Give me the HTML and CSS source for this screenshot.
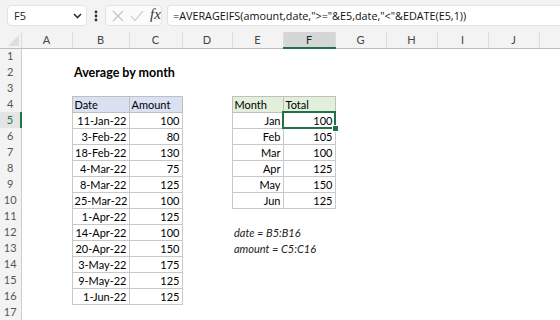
FILE: index.html
```html
<!DOCTYPE html>
<html lang="en">
<head>
  <meta charset="UTF-8">
  <title>Average by month</title>
  <link rel="stylesheet" href="styles.css">
</head>
<body>
  <div class="app">
    <!-- formula bar -->
    <div class="formula-bar">
      <div class="name-box">
        <span>F5</span>
        <svg class="chevron" width="9" height="6" viewBox="0 0 9 6"><path d="M1 1l3.5 3.5L8 1" fill="none" stroke="#333" stroke-width="1.6"/></svg>
      </div>
      <svg class="dots" width="4" height="12" viewBox="0 0 4 12"><circle cx="2" cy="2" r="1.4" fill="#333"/><circle cx="2" cy="6" r="1.4" fill="#333"/><circle cx="2" cy="10" r="1.4" fill="#333"/></svg>
      <div class="fx-box">
        <svg width="12" height="12" viewBox="0 0 12 12"><path d="M1 1l10 10M11 1L1 11" stroke="#c4c4c4" stroke-width="1.1"/></svg>
        <svg width="14" height="12" viewBox="0 0 14 12"><path d="M1 6l4 4.5L13 1" fill="none" stroke="#c4c4c4" stroke-width="1.1"/></svg>
        <span class="fx">fx</span>
      </div>
      <div class="formula">=AVERAGEIFS(amount,date,"&gt;="&amp;E5,date,"&lt;"&amp;EDATE(E5,1))</div>
    </div>

    <!-- sheet -->
    <table class="sheet">
      <colgroup>
        <col class="c-rh"><col class="c-a"><col class="c-b"><col class="c-c"><col class="c-d"><col class="c-e">
        <col class="c-f"><col class="c-g"><col class="c-h"><col class="c-i"><col class="c-j"><col>
      </colgroup>
      <thead>
        <tr>
          <th class="corner"><span class="tri"></span></th>
          <th>A</th><th>B</th><th>C</th><th>D</th><th>E</th><th class="active">F</th><th>G</th><th>H</th><th>I</th><th>J</th><th></th>
        </tr>
      </thead>
      <tbody>
        <tr><th>1</th><td></td><td></td><td></td><td></td><td></td><td></td><td></td><td></td><td></td><td></td><td></td></tr>
        <tr><th>2</th><td></td><td class="title">Average by month</td><td></td><td></td><td></td><td></td><td></td><td></td><td></td><td></td><td></td></tr>
        <tr><th>3</th><td></td><td></td><td></td><td></td><td></td><td></td><td></td><td></td><td></td><td></td><td></td></tr>
        <tr><th>4</th><td></td><td class="hd blue">Date</td><td class="hd blue">Amount</td><td></td><td class="hd green">Month</td><td class="hd green">Total</td><td></td><td></td><td></td><td></td><td></td></tr>
        <tr><th class="active">5</th><td></td><td class="tb">11-Jan-22</td><td class="tb">100</td><td></td><td class="tb">Jan</td><td class="tb sel">100</td><td></td><td></td><td></td><td></td><td></td></tr>
        <tr><th>6</th><td></td><td class="tb">3-Feb-22</td><td class="tb">80</td><td></td><td class="tb">Feb</td><td class="tb">105</td><td></td><td></td><td></td><td></td><td></td></tr>
        <tr><th>7</th><td></td><td class="tb">18-Feb-22</td><td class="tb">130</td><td></td><td class="tb">Mar</td><td class="tb">100</td><td></td><td></td><td></td><td></td><td></td></tr>
        <tr><th>8</th><td></td><td class="tb">4-Mar-22</td><td class="tb">75</td><td></td><td class="tb">Apr</td><td class="tb">125</td><td></td><td></td><td></td><td></td><td></td></tr>
        <tr><th>9</th><td></td><td class="tb">8-Mar-22</td><td class="tb">125</td><td></td><td class="tb">May</td><td class="tb">150</td><td></td><td></td><td></td><td></td><td></td></tr>
        <tr><th>10</th><td></td><td class="tb">25-Mar-22</td><td class="tb">100</td><td></td><td class="tb">Jun</td><td class="tb">125</td><td></td><td></td><td></td><td></td><td></td></tr>
        <tr><th>11</th><td></td><td class="tb">1-Apr-22</td><td class="tb">125</td><td></td><td></td><td></td><td></td><td></td><td></td><td></td><td></td></tr>
        <tr><th>12</th><td></td><td class="tb">14-Apr-22</td><td class="tb">100</td><td></td><td class="note">date = B5:B16</td><td></td><td></td><td></td><td></td><td></td><td></td></tr>
        <tr><th>13</th><td></td><td class="tb">20-Apr-22</td><td class="tb">150</td><td></td><td class="note">amount = C5:C16</td><td></td><td></td><td></td><td></td><td></td><td></td></tr>
        <tr><th>14</th><td></td><td class="tb">3-May-22</td><td class="tb">175</td><td></td><td></td><td></td><td></td><td></td><td></td><td></td><td></td></tr>
        <tr><th>15</th><td></td><td class="tb">9-May-22</td><td class="tb">125</td><td></td><td></td><td></td><td></td><td></td><td></td><td></td><td></td></tr>
        <tr><th>16</th><td></td><td class="tb">1-Jun-22</td><td class="tb">125</td><td></td><td></td><td></td><td></td><td></td><td></td><td></td><td></td></tr>
        <tr><th>17</th><td></td><td></td><td></td><td></td><td></td><td></td><td></td><td></td><td></td><td></td><td></td></tr>
      </tbody>
    </table>
  </div>
</body>
</html>
```

FILE: styles.css
```css
body {
  margin: 0;
  padding: 0;
  font-family: Lato, "Liberation Sans", sans-serif;
  background: #fff;
  overflow: hidden;
}
.app {
  width: 560px;
  height: 320px;
  overflow: hidden;
}
.formula-bar {
  height: 32px;
  background: #f3f3f3;
  display: flex;
  align-items: flex-start;
  padding: 5px 0 0 7px;
  box-sizing: border-box;
}
.name-box {
  width: 80px;
  height: 21px;
  box-sizing: border-box;
  background: #fff;
  border: 1px solid #e3e3e3;
  border-radius: 4px;
  display: flex;
  align-items: center;
  justify-content: space-between;
  padding: 0 4px 0 6px;
  font-family: "Open Sans", sans-serif;
  font-size: 11px;
  color: #222;
}
.chevron {
  margin-top: 1px;
}
.dots {
  margin: 5px 7px 0 7px;
}
.fx-box {
  width: 57px;
  height: 21px;
  box-sizing: border-box;
  background: #fbfbfb;
  border: 1px solid #e3e3e3;
  border-radius: 4px;
  display: flex;
  align-items: center;
  gap: 6px;
  padding: 0 0 0 6px;
}
.fx {
  font-family: "Liberation Serif", serif;
  font-style: italic;
  font-size: 15px;
  color: #333;
  margin-top: -3px;
}
.formula {
  flex: 1;
  margin-left: 5px;
  height: 21px;
  box-sizing: border-box;
  background: #fff;
  border: 1px solid #e3e3e3;
  border-right: none;
  border-radius: 4px 0 0 4px;
  padding: 0 0 0 5px;
  font-family: "Open Sans", sans-serif;
  font-size: 10.8px;
  line-height: 19px;
  color: #111;
  white-space: nowrap;
  overflow: hidden;
}

/* sheet grid */
.sheet {
  border-collapse: collapse;
  table-layout: fixed;
  width: 560px;
  font-size: 11px;
  color: #000;
}
.c-rh { width: 21px; }
.c-a { width: 51px; }
.c-b { width: 57px; }
.c-c { width: 53px; }
.c-d { width: 50px; }
.c-e { width: 51px; }
.c-f { width: 52px; }
.c-g, .c-h, .c-i, .c-j { width: 51px; }
.sheet thead tr {
  height: 16px;
}
.sheet thead th {
  padding: 0;
  background: #f3f3f3;
  border-left: 1px solid #dcdcdc;
  border-bottom: 1px solid #bdbdbd;
  font-weight: normal;
  font-size: 11px;
  color: #444;
  text-align: center;
  line-height: 13px;
}
.sheet thead th.corner {
  border-left: none;
  position: relative;
}
.tri {
  position: absolute;
  right: 2px;
  bottom: 2px;
  width: 0;
  height: 0;
  border-left: 11px solid transparent;
  border-bottom: 11px solid #dedede;
}
.sheet thead th.active {
  background: #d6d6d6;
  border-bottom: 2px solid #217346;
  color: #222;
}
.sheet tbody tr {
  height: 16px;
}
.sheet tbody th {
  padding: 0;
  background: #f3f3f3;
  border-right: 1px solid #cfcfcf;
  font-weight: normal;
  font-size: 11px;
  color: #555;
  text-align: center;
  line-height: 14px;
}
.sheet tbody th.active {
  background: #e4e4e4;
  border-right: 2px solid #217346;
  color: #217346;
}
.sheet td {
  padding: 0 2px;
  line-height: 14px;
  white-space: nowrap;
  overflow: visible;
  vertical-align: bottom;
}
.title {
  font-weight: bold;
  font-size: 12.5px;
}
.hd {
  border: 1px solid #bfbfbf;
  text-align: left;
}
.blue {
  background: #d9e1f2;
}
.green {
  background: #e2efda;
}
.tb {
  border: 1px solid #c8c8c8;
  text-align: right;
}
.sel {
  position: relative;
  outline: 2px solid #217346;
  outline-offset: -1px;
}
.sel::after {
  content: "";
  position: absolute;
  right: -4px;
  bottom: -4px;
  width: 5px;
  height: 5px;
  background: #217346;
  border: 1px solid #fff;
}
.note {
  font-style: italic;
  color: #222;
}
```
